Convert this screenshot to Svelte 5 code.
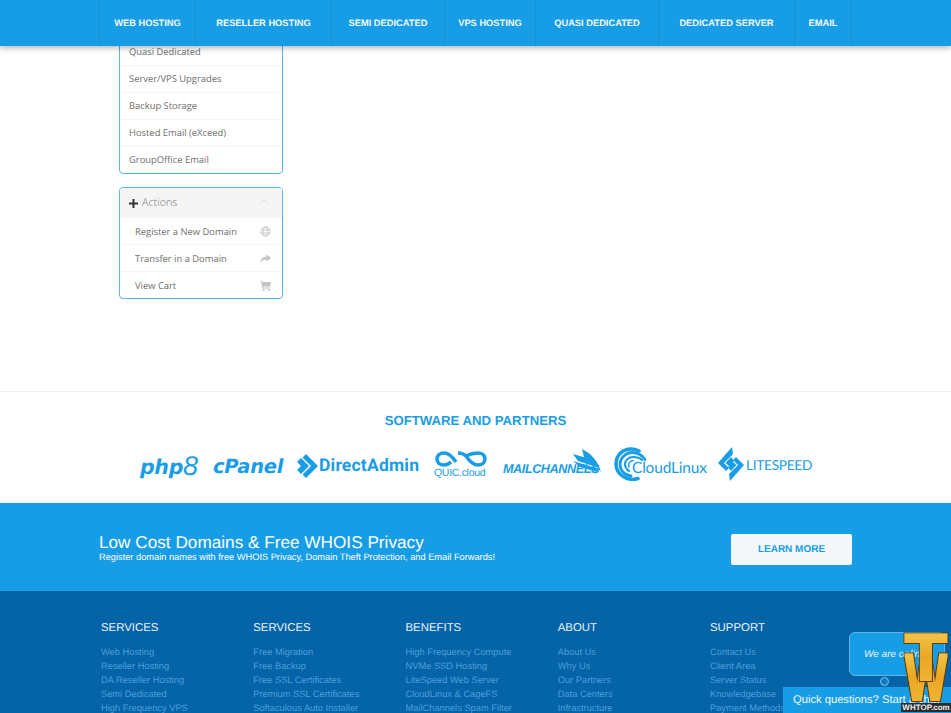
<script>
	const navItems = [
		{ label: 'Web Hosting', width: 96 },
		{ label: 'Reseller Hosting', width: 136 },
		{ label: 'Semi Dedicated', width: 113 },
		{ label: 'VPS Hosting', width: 91 },
		{ label: 'Quasi Dedicated', width: 123 },
		{ label: 'Dedicated Server', width: 136 },
		{ label: 'Email', width: 57 }
	];

	const serviceLinks = ['Quasi Dedicated', 'Server/VPS Upgrades', 'Backup Storage', 'Hosted Email (eXceed)', 'GroupOffice Email'];

	const footerColumns = [
		{ title: 'Services', links: ['Web Hosting', 'Reseller Hosting', 'DA Reseller Hosting', 'Semi Dedicated', 'High Frequency VPS'] },
		{ title: 'Services', links: ['Free Migration', 'Free Backup', 'Free SSL Certificates', 'Premium SSL Certificates', 'Softaculous Auto Installer'] },
		{ title: 'Benefits', links: ['High Frequency Compute', 'NVMe SSD Hosting', 'LiteSpeed Web Server', 'CloudLinux & CageFS', 'MailChannels Spam Filter'] },
		{ title: 'About', links: ['About Us', 'Why Us', 'Our Partners', 'Data Centers', 'Infrastructure'] },
		{ title: 'Support', links: ['Contact Us', 'Client Area', 'Server Status', 'Knowledgebase', 'Payment Methods'] }
	];
</script>

<div class="page">
	<nav class="topnav">
		<ul class="nav-list">
			{#each navItems as item}
				<li class="nav-item" style="width: {item.width}px">{item.label}</li>
			{/each}
		</ul>
	</nav>

	<main class="content">
		<aside class="sidebar">
			<div class="panel">
				{#each serviceLinks as link}
					<div class="panel-row">{link}</div>
				{/each}
			</div>

			<div class="panel">
				<div class="panel-head">
					<svg class="plus" viewBox="0 0 9 9" aria-hidden="true">
						<path d="M3.500 0h2v3.500H9v2H5.500V9h-2V5.500H0v-2h3.500z" fill="#333" />
					</svg>
					<span class="panel-title">Actions</span>
					<svg class="chevron" viewBox="0 0 12 8" aria-hidden="true">
						<path d="M1.500 6 6 2l4.500 4" fill="none" stroke="#dcdcdc" stroke-width="1.200" />
					</svg>
				</div>
				<div class="panel-row action">
					<span>Register a New Domain</span>
					<svg class="row-icon" viewBox="0 0 12 12" aria-hidden="true">
						<g fill="none" stroke="#c4c4c4" stroke-width="1">
							<circle cx="6" cy="6" r="5" />
							<ellipse cx="6" cy="6" rx="2.200" ry="5" />
							<path d="M1 4.300h10M1 7.700h10" />
						</g>
					</svg>
				</div>
				<div class="panel-row action">
					<span>Transfer in a Domain</span>
					<svg class="row-icon" viewBox="0 0 12 12" aria-hidden="true">
						<path d="M7 1.500 12 5.500 7 9.500V7C4 7 2 8 .6 10.500.8 6.500 3 4 7 4z" fill="#c4c4c4" />
					</svg>
				</div>
				<div class="panel-row action">
					<span>View Cart</span>
					<svg class="row-icon" viewBox="0 0 12 12" aria-hidden="true">
						<path d="M0 1h2l.4 1.200H12l-1 5H3.400l.2 1H11v1H2.800L1.300 2H0z" fill="#c4c4c4" />
						<circle cx="4" cy="10.800" r="1.100" fill="#c4c4c4" />
						<circle cx="9.800" cy="10.800" r="1.100" fill="#c4c4c4" />
					</svg>
				</div>
			</div>
		</aside>
	</main>

	<section class="partners">
		<h2 class="partners-title">Software and Partners</h2>
		<div class="logos">
			<div class="logo php">
				<span>php</span><span class="php-eight">8</span>
			</div>
			<div class="logo cpanel">cPanel</div>
			<div class="logo directadmin">
				<svg viewBox="0 0 22 24" width="22" height="24" aria-hidden="true">
					<path d="M9 0 21 12 9 24 5.500 20.500 14 12 5.500 3.500zM0 8l4-4 8 8-8 8-4-4 4-4z" fill="#1a9de6" />
				</svg>
				<span>DirectAdmin</span>
			</div>
			<div class="logo quic">
				<svg viewBox="0 0 54 18" width="54" height="18" aria-hidden="true">
					<path d="M22 12C18 6 14 3 10 3 6 3 3 5.500 3 9s3 6 7 6c3 0 5-1 7-3M32 6c4-2 8-3 12-3 4 0 7 2.500 7 6s-3 6-7 6c-4 0-8-3-12-9-2-2-5-3-8-3" fill="none" stroke="#1a9de6" stroke-width="3.500" />
				</svg>
				<span>QUIC.cloud</span>
			</div>
			<div class="logo mail">
				<svg class="mail-wing" viewBox="0 0 32 28" width="32" height="28" aria-hidden="true">
					<path d="M12 1C20 5 28 12 31 24 26 17 20 12 14 9zM3 6l17 5c4 2 7 5 9 9L8 13zM3 13l23 7 1 4-17-5z" fill="#1a9de6" />
				</svg>
				<span>MAILCHANNELS</span>
			</div>
			<div class="logo cloudlinux">
				<svg viewBox="0 0 34 34" width="34" height="34" aria-hidden="true">
					<g fill="none" stroke="#1a9de6" stroke-linecap="round">
						<path d="M24 31.500C13 35 2 27 2 17 2 8 9 2 17 2c3 0 6 1 8 2" stroke-width="3.500" />
						<path d="M17 29C10 28 6 23 6 17 6 11 12 5.500 18 5.500c5 0 10 2.500 13 7" stroke-width="2.800" />
						<path d="M15 24C12 22 11 20 11 17 11 13 15 10 19 10c4 0 7 1 9 3" stroke-width="2.200" />
						<path d="M15 20C14 17 15 14.500 19 13.500" stroke-width="1.500" />
					</g>
				</svg>
				<span>CloudLinux</span>
			</div>
			<div class="logo litespeed">
				<svg viewBox="0 0 26 34" width="26" height="34" aria-hidden="true">
					<path d="M14 0 15 7 6 16l5 5-3 3-8-8zM12 34 11 27l9-9-5-5 3-3 8 8z" fill="#1a9de6" />
					<path d="M13 10 7.500 16l3.500 3 5-5zM13 24l5.500-6-3.500-3-5 5z" fill="#1a9de6" />
				</svg>
				<span>LITESPEED</span>
			</div>
		</div>
	</section>

	<section class="cta">
		<div class="cta-text">
			<h3 class="cta-title">Low Cost Domains &amp; Free WHOIS Privacy</h3>
			<p class="cta-sub">Register domain names with free WHOIS Privacy, Domain Theft Protection, and Email Forwards!</p>
		</div>
		<div class="cta-btn">Learn More</div>
	</section>

	<footer class="footer">
		{#each footerColumns as col}
			<div class="footer-col">
				<h4 class="footer-title">{col.title}</h4>
				<ul class="footer-links">
					{#each col.links as link}
						<li>{link}</li>
					{/each}
				</ul>
			</div>
		{/each}
	</footer>

	<div class="chat-bubble">
		<em>We are online!</em>
		<span class="bubble-dot"></span>
	</div>
	<div class="chat-bar">Quick questions? Start a chat</div>

	<div class="badge">
		<svg viewBox="0 0 50 83" width="50" height="83" aria-hidden="true">
			<defs>
				<linearGradient id="gold" x1="0" y1="0" x2="0" y2="1">
					<stop offset="0" stop-color="#f6d25a" />
					<stop offset="0.500" stop-color="#eaa623" />
					<stop offset="1" stop-color="#f4b93a" />
				</linearGradient>
				<filter id="chunk" x="-20%" y="-20%" width="140%" height="140%">
					<feMorphology in="SourceGraphic" operator="dilate" radius="0.8" result="body" />
					<feMorphology in="body" operator="dilate" radius="1" result="edge" />
					<feFlood flood-color="#5e3c08" />
					<feComposite in2="edge" operator="in" result="dark" />
					<feMerge>
						<feMergeNode in="dark" />
						<feMergeNode in="body" />
					</feMerge>
				</filter>
			</defs>
			<text class="badge-w" transform="translate(25 70) scale(0.66 1)" text-anchor="middle" filter="url(#chunk)">W</text>
			<text class="badge-t" transform="translate(25 50) scale(1.050 1)" text-anchor="middle" filter="url(#chunk)">T</text>
		</svg>
		<span class="badge-site">WHTOP.com</span>
	</div>
</div>

<style>
	:global(body) {
		margin: 0;
		background: #fff;
	}

	.page {
		position: relative;
		display: flex;
		flex-direction: column;
		height: 713px;
		overflow: hidden;
		font-family: 'Liberation Sans', Arial, sans-serif;
		text-rendering: geometricPrecision;
	}

	.topnav {
		position: relative;
		z-index: 5;
		flex: none;
		height: 46px;
		background: #179de6;
		box-shadow: 0 2px 6px rgba(0, 0, 0, 0.3);
	}

	.nav-list {
		display: flex;
		height: 100%;
		margin: 0 0 0 99px;
		padding: 0;
		list-style: none;
		border-left: 1px solid #1390d4;
		width: max-content;
	}

	.nav-item {
		display: flex;
		align-items: center;
		justify-content: center;
		box-sizing: border-box;
		border-right: 1px solid #1390d4;
		color: #f4f9fd;
		font-size: 9.300px;
		font-weight: 700;
		text-transform: uppercase;
	}

	.content {
		flex: none;
		height: 346px;
		padding: 0 0 0 119px;
		box-sizing: border-box;
		border-bottom: 1px solid #f0f0f0;
	}

	.sidebar {
		display: flex;
		flex-direction: column;
		gap: 13px;
		width: 164px;
		margin-top: -8px;
		font-family: 'Open Sans', sans-serif;
	}

	.panel {
		border: 1px solid #5cb5e6;
		border-radius: 4px;
		overflow: hidden;
		background: #fff;
	}

	.panel-row {
		display: flex;
		align-items: center;
		justify-content: space-between;
		box-sizing: border-box;
		height: 27px;
		padding: 0 11px 2px 9px;
		border-bottom: 1px solid #f6f6f6;
		color: #6e6e6e;
		font-size: 9.400px;
	}

	.panel-row:last-child {
		border-bottom: none;
		height: 26px;
	}

	.panel-row.action {
		padding: 0 11px 0 15px;
	}

	.panel-head {
		display: flex;
		align-items: center;
		height: 30px;
		padding: 0 13px 0 9px;
		background: #f5f5f5;
	}

	.plus {
		width: 9px;
		height: 9px;
		margin-right: 4px;
	}

	.panel-title {
		flex: 1;
		margin-bottom: 1px;
		color: #777;
		font-size: 10.800px;
		font-weight: 300;
	}

	.chevron {
		width: 10px;
		height: 7px;
		margin-bottom: 4px;
	}

	.row-icon {
		width: 11px;
		height: 11px;
	}

	.partners {
		flex: none;
		height: 111px;
		box-sizing: border-box;
		padding-top: 21px;
		background: #fff;
		box-shadow: inset 0 -2px 2px -1px #eee;
	}

	.partners-title {
		margin: 0;
		color: #1a9de6;
		font-size: 13.200px;
		font-weight: 700;
		line-height: 16px;
		text-align: center;
		text-transform: uppercase;
	}

	.logos {
		display: flex;
		align-items: center;
		height: 40px;
		margin: 15px 0 0 140px;
		color: #1a9de6;
	}

	.logo {
		display: flex;
		align-items: center;
		flex: none;
	}

	.php {
		width: 73px;
		padding-top: 5px;
		font-family: 'DejaVu Sans', sans-serif;
		font-size: 20.500px;
		font-weight: 700;
		font-style: italic;
		letter-spacing: -0.3px;
	}

	.php-eight {
		font-family: 'Liberation Sans', sans-serif;
		font-size: 27px;
		font-weight: 400;
		letter-spacing: 0;
	}

	.cpanel {
		width: 84px;
		padding-top: 5px;
		font-family: 'DejaVu Sans', sans-serif;
		font-size: 19.500px;
		font-weight: 700;
		font-style: italic;
		letter-spacing: -0.2px;
	}

	.directadmin {
		width: 137px;
		padding-top: 4px;
		font-family: 'Roboto', sans-serif;
		font-size: 17.500px;
		font-weight: 700;
		letter-spacing: 0.2px;
	}

	.quic {
		width: 69px;
		flex-direction: column;
		align-items: flex-start;
		font-size: 10.500px;
		line-height: 10px;
		letter-spacing: -0.3px;
	}

	.mail {
		position: relative;
		width: 111px;
		padding-top: 9px;
		font-size: 12.600px;
		font-weight: 700;
		font-style: italic;
		letter-spacing: -0.4px;
	}

	.mail-wing {
		position: absolute;
		left: 67px;
		top: -5px;
	}

	.cloudlinux {
		width: 104px;
		font-family: 'Lato', sans-serif;
		font-size: 15.500px;
		letter-spacing: -0.2px;
	}

	.cloudlinux span {
		margin: 8px 0 0 -16px;
	}

	.litespeed {
		gap: 2px;
		font-family: 'Lato', sans-serif;
		font-size: 13.700px;
		letter-spacing: -0.3px;
	}

	.cta {
		flex: none;
		display: flex;
		align-items: center;
		justify-content: space-between;
		box-sizing: border-box;
		height: 88px;
		padding: 0 99px;
		background: #179de6;
		color: #fff;
	}

	.cta-text {
		padding-top: 2px;
	}

	.cta-title {
		margin: 0;
		font-size: 17.200px;
		font-weight: 400;
		line-height: 18px;
	}

	.cta-sub {
		margin: 0;
		font-size: 9.250px;
		line-height: 13px;
	}

	.cta-btn {
		display: flex;
		align-items: center;
		justify-content: center;
		width: 121px;
		height: 31px;
		margin-top: 4px;
		border-radius: 2px;
		background: #f5f7fa;
		color: #179de6;
		font-size: 10px;
		font-weight: 700;
		text-transform: uppercase;
	}

	.footer {
		flex: 1;
		display: grid;
		grid-template-columns: repeat(5, 152.250px);
		padding: 30px 0 0 101px;
		background: #0563a8;
	}

	.footer-title {
		margin: 0 0 9px;
		color: #e8f2fa;
		font-size: 11.400px;
		font-weight: 400;
		line-height: 15px;
		text-transform: uppercase;
	}

	.footer-links {
		margin: 0;
		padding: 0;
		list-style: none;
		color: #4d9fdb;
		font-size: 9.300px;
		line-height: 14px;
	}

	.chat-bubble {
		position: absolute;
		left: 849px;
		top: 632px;
		box-sizing: border-box;
		width: 96px;
		height: 44px;
		padding: 16px 0 0 14px;
		border: 1px solid #60b4e8;
		border-radius: 6px;
		background: #179de6;
		color: #eaf5fc;
		font-size: 10px;
		white-space: nowrap;
	}

	.bubble-dot {
		position: absolute;
		left: 30px;
		top: 44px;
		box-sizing: border-box;
		width: 9px;
		height: 9px;
		border: 1px solid #8cc8ee;
		border-radius: 50%;
		background: #0f7cc4;
	}

	.chat-bar {
		position: absolute;
		left: 783px;
		top: 687px;
		box-sizing: border-box;
		width: 168px;
		height: 26px;
		padding: 7px 0 0 10px;
		background: #179de6;
		color: #f4f9fd;
		font-size: 11.200px;
		white-space: nowrap;
		overflow: hidden;
	}

	.badge {
		position: absolute;
		left: 901px;
		top: 630px;
		width: 50px;
		height: 83px;
	}

	.badge svg {
		display: block;
	}

	.badge-t,
	.badge-w {
		font-family: 'Liberation Sans', sans-serif;
		font-size: 66px;
		font-weight: 700;
		fill: url(#gold);
	}

	.badge-site {
		position: absolute;
		left: 0;
		bottom: 1px;
		width: 50px;
		color: #f2f2f2;
		background: #2b2b2b;
		font-size: 8px;
		font-weight: 700;
		line-height: 9px;
		text-align: center;
		white-space: nowrap;
	}
</style>
